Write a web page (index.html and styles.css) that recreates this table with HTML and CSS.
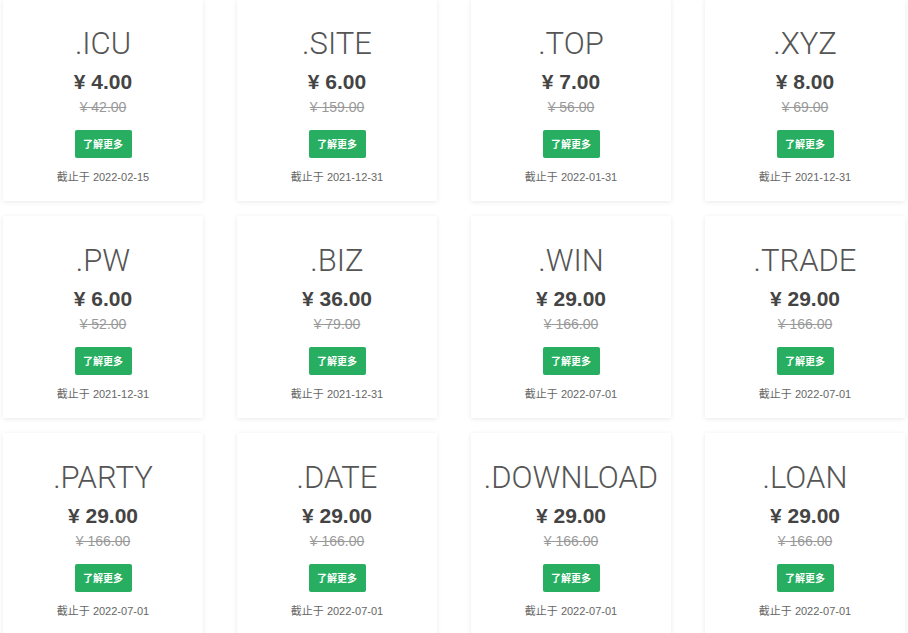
FILE: index.html
```html
<!DOCTYPE html>
<html lang="zh-CN">
<head>
  <meta charset="UTF-8" />
  <title>域名优惠</title>
  <link rel="stylesheet" href="styles.css">
</head>
<body>

  <div class="domain-list">
    <div class="card">
      <div class="tld">.ICU</div>
      <div class="price">¥ 4.00</div>
      <div class="old-price">¥ 42.00</div>
      <a class="btn" href="#">了解更多</a>
      <div class="deadline">截止于 2022-02-15</div>
    </div>
    <div class="card">
      <div class="tld">.SITE</div>
      <div class="price">¥ 6.00</div>
      <div class="old-price">¥ 159.00</div>
      <a class="btn" href="#">了解更多</a>
      <div class="deadline">截止于 2021-12-31</div>
    </div>
    <div class="card">
      <div class="tld">.TOP</div>
      <div class="price">¥ 7.00</div>
      <div class="old-price">¥ 56.00</div>
      <a class="btn" href="#">了解更多</a>
      <div class="deadline">截止于 2022-01-31</div>
    </div>
    <div class="card">
      <div class="tld">.XYZ</div>
      <div class="price">¥ 8.00</div>
      <div class="old-price">¥ 69.00</div>
      <a class="btn" href="#">了解更多</a>
      <div class="deadline">截止于 2021-12-31</div>
    </div>

    <div class="card">
      <div class="tld">.PW</div>
      <div class="price">¥ 6.00</div>
      <div class="old-price">¥ 52.00</div>
      <a class="btn" href="#">了解更多</a>
      <div class="deadline">截止于 2021-12-31</div>
    </div>
    <div class="card">
      <div class="tld">.BIZ</div>
      <div class="price">¥ 36.00</div>
      <div class="old-price">¥ 79.00</div>
      <a class="btn" href="#">了解更多</a>
      <div class="deadline">截止于 2021-12-31</div>
    </div>
    <div class="card">
      <div class="tld">.WIN</div>
      <div class="price">¥ 29.00</div>
      <div class="old-price">¥ 166.00</div>
      <a class="btn" href="#">了解更多</a>
      <div class="deadline">截止于 2022-07-01</div>
    </div>
    <div class="card">
      <div class="tld">.TRADE</div>
      <div class="price">¥ 29.00</div>
      <div class="old-price">¥ 166.00</div>
      <a class="btn" href="#">了解更多</a>
      <div class="deadline">截止于 2022-07-01</div>
    </div>

    <div class="card">
      <div class="tld">.PARTY</div>
      <div class="price">¥ 29.00</div>
      <div class="old-price">¥ 166.00</div>
      <a class="btn" href="#">了解更多</a>
      <div class="deadline">截止于 2022-07-01</div>
    </div>
    <div class="card">
      <div class="tld">.DATE</div>
      <div class="price">¥ 29.00</div>
      <div class="old-price">¥ 166.00</div>
      <a class="btn" href="#">了解更多</a>
      <div class="deadline">截止于 2022-07-01</div>
    </div>
    <div class="card">
      <div class="tld">.DOWNLOAD</div>
      <div class="price">¥ 29.00</div>
      <div class="old-price">¥ 166.00</div>
      <a class="btn" href="#">了解更多</a>
      <div class="deadline">截止于 2022-07-01</div>
    </div>
    <div class="card">
      <div class="tld">.LOAN</div>
      <div class="price">¥ 29.00</div>
      <div class="old-price">¥ 166.00</div>
      <a class="btn" href="#">了解更多</a>
      <div class="deadline">截止于 2022-07-01</div>
    </div>
  </div>

</body>
</html>
```

FILE: styles.css
```css
body {
  margin: 0;
  background: #fff;
  font-family: "Liberation Sans", Arial, "Noto Sans CJK SC", sans-serif;
  color: #555;
}
.domain-list {
  display: grid;
  grid-template-columns: repeat(4, 200px);
  column-gap: 34px;
  row-gap: 15px;
  margin-top: -1px;
  padding-left: 3px;
}
.card {
  height: 202px;
  box-sizing: border-box;
  padding-top: 26px;
  background: #fff;
  box-shadow: 0 1px 5px rgba(0,0,0,0.09);
  text-align: center;
}
.tld {
  font-family: Roboto, "Liberation Sans", sans-serif;
  font-weight: 300;
  font-size: 31px;
  line-height: 37px;
  color: #555;
}
.price {
  margin-top: 7px;
  font-size: 21px;
  line-height: 26px;
  font-weight: bold;
  color: #444;
}
.old-price {
  margin-top: 2px;
  font-size: 14px;
  line-height: 20px;
  color: #999;
  text-decoration: line-through;
}
.btn {
  display: inline-block;
  margin-top: 13px;
  width: 57px;
  height: 28px;
  line-height: 28px;
  border-radius: 2px;
  background: #27ae60;
  color: #fff;
  font-family: "Noto Sans CJK SC", sans-serif;
  font-size: 10px;
  font-weight: bold;
  text-decoration: none;
}
.deadline {
  margin-top: 11px;
  font-size: 11px;
  line-height: 16px;
  color: #666;
}
```
